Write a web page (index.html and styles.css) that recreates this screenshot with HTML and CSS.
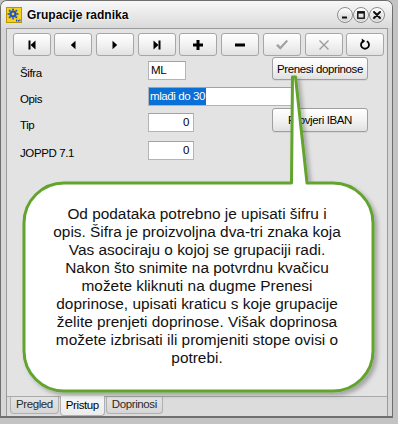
FILE: index.html
```html
<!DOCTYPE html>
<html lang="hr">
<head>
<meta charset="utf-8">
<title>Grupacije radnika</title>
<link rel="stylesheet" href="styles.css">
</head>
<body>
<div class="window">
  <div class="titlebar">
    <svg class="app-icon" width="16" height="16" viewBox="0 0 16 16">
      <rect x="0.5" y="0.5" width="15" height="15" fill="#f6d21a" stroke="#b89400"/>
      <g fill="#1f4fc4">
        <circle cx="7" cy="7" r="3.6"/>
        <rect x="6.2" y="1.6" width="1.6" height="2"/>
        <rect x="6.2" y="10.4" width="1.6" height="2"/>
        <rect x="1.6" y="6.2" width="2" height="1.6"/>
        <rect x="10.4" y="6.2" width="2" height="1.6"/>
        <rect x="2.8" y="2.8" width="1.8" height="1.8"/>
        <rect x="9.4" y="2.8" width="1.8" height="1.8"/>
        <rect x="2.8" y="9.4" width="1.8" height="1.8"/>
        <rect x="9.4" y="9.4" width="1.8" height="1.8"/>
        <rect x="10" y="12.5" width="1.2" height="2"/>
        <rect x="11.8" y="13" width="1.2" height="1.5"/>
        <rect x="13.4" y="12.2" width="1" height="2.3"/>
      </g>
      <circle cx="7" cy="7" r="1.4" fill="#f6d21a"/>
    </svg>
    <span class="title">Grupacije radnika</span>
    <div class="winbtns">
      <span class="wbtn"><svg width="10" height="10" viewBox="0 0 10 10"><rect x="2" y="6.5" width="5" height="2" fill="#111"/></svg></span>
      <span class="wbtn"><svg width="10" height="10" viewBox="0 0 10 10"><rect x="1.8" y="1.8" width="6.4" height="6.4" fill="none" stroke="#111" stroke-width="1.4"/><rect x="1.8" y="1.8" width="6.4" height="1.8" fill="#111"/></svg></span>
      <span class="wbtn"><svg width="10" height="10" viewBox="0 0 10 10"><path d="M2 2 L8 8 M8 2 L2 8" stroke="#111" stroke-width="2" stroke-linecap="round"/></svg></span>
    </div>
  </div>

  <div class="client">
    <div class="page">
      <div class="toolbar">
        <button class="tb"><svg width="12" height="12" viewBox="0 0 12 12"><rect x="2.5" y="1.5" width="2" height="9" fill="#000"/><path d="M9.5 1.5 L4.5 6 L9.5 10.5 Z" fill="#000"/></svg></button>
        <button class="tb"><svg width="12" height="12" viewBox="0 0 12 12"><path d="M8.5 1.8 L3.8 6 L8.5 10.2 Z" fill="#000"/></svg></button>
        <button class="tb"><svg width="12" height="12" viewBox="0 0 12 12"><path d="M3.5 1.8 L8.2 6 L3.5 10.2 Z" fill="#000"/></svg></button>
        <button class="tb"><svg width="12" height="12" viewBox="0 0 12 12"><path d="M2.5 1.5 L7.5 6 L2.5 10.5 Z" fill="#000"/><rect x="7.5" y="1.5" width="2" height="9" fill="#000"/></svg></button>
        <button class="tb"><svg width="12" height="12" viewBox="0 0 12 12"><rect x="1" y="4.5" width="10" height="3" fill="#000"/><rect x="4.5" y="1" width="3" height="10" fill="#000"/></svg></button>
        <button class="tb"><svg width="12" height="12" viewBox="0 0 12 12"><rect x="1" y="4.5" width="10" height="3" fill="#000"/></svg></button>
        <button class="tb"><svg width="14" height="12" viewBox="0 0 14 12"><path d="M1 6.5 L3 5 L5.3 7.6 L11.6 0.8 L13 2.2 L5.3 10.8 Z" fill="#a0a0a0"/></svg></button>
        <button class="tb"><svg width="12" height="12" viewBox="0 0 12 12"><path d="M1.5 1.5 L10.5 10.5 M10.5 1.5 L1.5 10.5" stroke="#9c9c9c" stroke-width="1.4"/></svg></button>
        <button class="tb"><svg width="12" height="13" viewBox="0 0 12 13"><path d="M4.2 3.2 A4 4 0 1 0 7.8 3.2" fill="none" stroke="#000" stroke-width="1.8"/><path d="M2.6 0.6 L6.2 3.1 L3.3 5.4 Z" fill="#000"/></svg></button>
      </div>

      <div class="form">
        <span class="lbl row-a">Šifra</span>
        <div class="field row-a short">ML</div>
        <button class="side-btn row-a">Prenesi doprinose</button>

        <span class="lbl row-b">Opis</span>
        <div class="field row-b wide"><span class="sel">mlađi do 30</span></div>

        <span class="lbl row-c">Tip</span>
        <div class="field row-c num">0</div>
        <button class="side-btn row-c">Provjeri IBAN</button>

        <span class="lbl row-d">JOPPD 7.1</span>
        <div class="field row-d num">0</div>
      </div>
    </div>
    <div class="tabs">
      <span class="tab">Pregled</span>
      <span class="tab active">Pristup</span>
      <span class="tab">Doprinosi</span>
    </div>
  </div>

  <div class="callout">
    <svg class="bubble" width="398" height="424" viewBox="0 0 398 424">
      <defs>
        <filter id="sh" x="-10%" y="-10%" width="130%" height="130%">
          <feDropShadow dx="3" dy="3" stdDeviation="2" flood-color="#000" flood-opacity="0.28"/>
        </filter>
      </defs>
      <path d="M64 183 H291.5 L292.5 77 L295.5 77 L307 183 H333 A40 40 0 0 1 373 223 V351 A40 40 0 0 1 333 391 H64 A40 40 0 0 1 24 351 V223 A40 40 0 0 1 64 183 Z" fill="#fff" stroke="#62a42e" stroke-width="3" stroke-linejoin="round" filter="url(#sh)"/>
    </svg>
    <p class="callout-text">Od podataka potrebno je upisati šifru i<br>opis. Šifra je proizvoljna dva-tri znaka koja<br>Vas asociraju o kojoj se grupaciji radi.<br>Nakon što snimite na potvrdnu kvačicu<br>možete kliknuti na dugme Prenesi<br>doprinose, upisati kraticu s koje grupacije<br>želite prenjeti doprinose. Višak doprinosa<br>možete izbrisati ili promjeniti stope ovisi o<br>potrebi.</p>
  </div>
</div>
</body>
</html>
```

FILE: styles.css
```css
* { box-sizing: border-box; }

html, body {
  margin: 0;
  padding: 0;
}

body {
  width: 398px;
  height: 424px;
  overflow: hidden;
  background: #c3c3c3;
  font-family: "Liberation Sans", Arial, sans-serif;
  font-size: 11.5px;
  letter-spacing: -0.4px;
  color: #000;
}

.window {
  position: relative;
  width: 393px;
  height: 418px;
  border: 1px solid #6f6f6f;
  border-bottom-width: 2px;
  border-radius: 7px 7px 0 0;
  background: #d6d6d6;
  display: flex;
  flex-direction: column;
}

.titlebar {
  flex: none;
  height: 27px;
  display: flex;
  align-items: center;
  padding: 0 7px 0 5px;
  border-radius: 6px 6px 0 0;
  background: linear-gradient(#f8f8f8, #dadada);
}

.app-icon { flex: none; display: block; }

.title {
  margin-left: 5px;
  font-size: 12px;
  font-weight: bold;
  letter-spacing: 0;
  color: #050505;
  text-shadow: 0 0 3px #fff, 0 0 2px #fff;
}

.winbtns {
  margin-left: auto;
  display: flex;
  gap: 0;
}

.wbtn {
  width: 16px;
  height: 16px;
  border-radius: 50%;
  border: 1px solid #8c8c8c;
  background: linear-gradient(#ffffff, #cfcfcf);
  display: flex;
  align-items: center;
  justify-content: center;
  box-shadow: inset 0 0 0 1px rgba(255,255,255,0.6);
}

.client {
  flex: 1;
  margin: 0 4px 0 5px;
  border: 1px solid #9a9a9a;
  border-bottom: none;
  background: #dcdcdc;
  display: flex;
  flex-direction: column;
}

.page {
  flex: none;
  height: 368px;
  background: #e3e3e3;
  border-bottom: 1px solid #a9a9a9;
}

.toolbar {
  display: grid;
  grid-template-columns: repeat(9, 38px);
  column-gap: 3.7px;
  padding: 4px 0 0 5.7px;
}

.tb {
  height: 23px;
  margin: 0;
  padding: 0;
  border: 1px solid #a6a6a6;
  border-radius: 3px;
  background: linear-gradient(#ffffff 0%, #f2f2f2 50%, #e2e2e2 100%);
  display: flex;
  align-items: center;
  justify-content: center;
}

.tb svg { display: block; }

.form {
  display: grid;
  grid-template-columns: 128px 124px 96px;
  grid-template-rows: 23px 7px 19px 2px 24px 9px 19px;
  padding-left: 13px;
  margin-top: 1px;
}

.row-a { grid-row: 1; }
.row-b { grid-row: 3; }
.row-c { grid-row: 5; }
.row-d { grid-row: 7; }

.lbl {
  grid-column: 1;
  align-self: end;
  line-height: 12px;
  padding-bottom: 1px;
}

.field {
  grid-column: 2;
  align-self: end;
  height: 19px;
  border: 1px solid #b4b4b4;
  border-top-color: #a2a2a2;
  background: #fff;
  line-height: 17px;
  padding: 0 2px;
  white-space: nowrap;
  overflow: hidden;
}

.field.short { width: 38px; }
.field.wide { grid-column: 2 / span 2; width: 149px; padding: 0; }
.field.num { width: 46px; text-align: right; padding-right: 4px; }

.sel {
  display: inline-block;
  height: 17px;
  padding: 0 1px 0 1px;
  background: #0a6fd6;
  color: #fff;
}

.side-btn {
  grid-column: 3;
  margin: 0;
  padding: 0;
  height: 23px;
  border: 1px solid #9f9f9f;
  border-radius: 3px;
  background: linear-gradient(#ffffff 0%, #f3f3f3 50%, #e1e1e1 100%);
  font-family: inherit;
  font-size: 11.5px;
  letter-spacing: -0.4px;
  color: #000;
  box-shadow: 0 1px 0 rgba(0,0,0,0.06);
}

.side-btn.row-c { height: 24px; }

.tabs {
  flex: 1;
  display: flex;
  align-items: flex-start;
  padding-left: 3px;
}

.tab {
  height: 17px;
  padding: 0 5px;
  border: 1px solid #b0b0b0;
  border-top: none;
  border-radius: 0 0 4px 4px;
  background: linear-gradient(#e4e4e4, #d6d6d6);
  line-height: 15px;
  color: #2a2a2a;
  margin-right: 1px;
}

.tab.active {
  height: 20px;
  margin-top: -1px;
  line-height: 18px;
  background: linear-gradient(#f7f7f7, #ececec);
  color: #000;
}

.callout {
  position: absolute;
  left: -1px;
  top: -1px;
  width: 398px;
  height: 424px;
  pointer-events: none;
}

.bubble {
  position: absolute;
  left: 0;
  top: 0;
  display: block;
}

.callout-text {
  position: absolute;
  left: 24px;
  top: 205px;
  width: 346px;
  margin: 0;
  text-align: center;
  font-family: "Liberation Sans", Arial, sans-serif;
  font-size: 15.4px;
  line-height: 18px;
  letter-spacing: 0;
  color: #111;
}
```
